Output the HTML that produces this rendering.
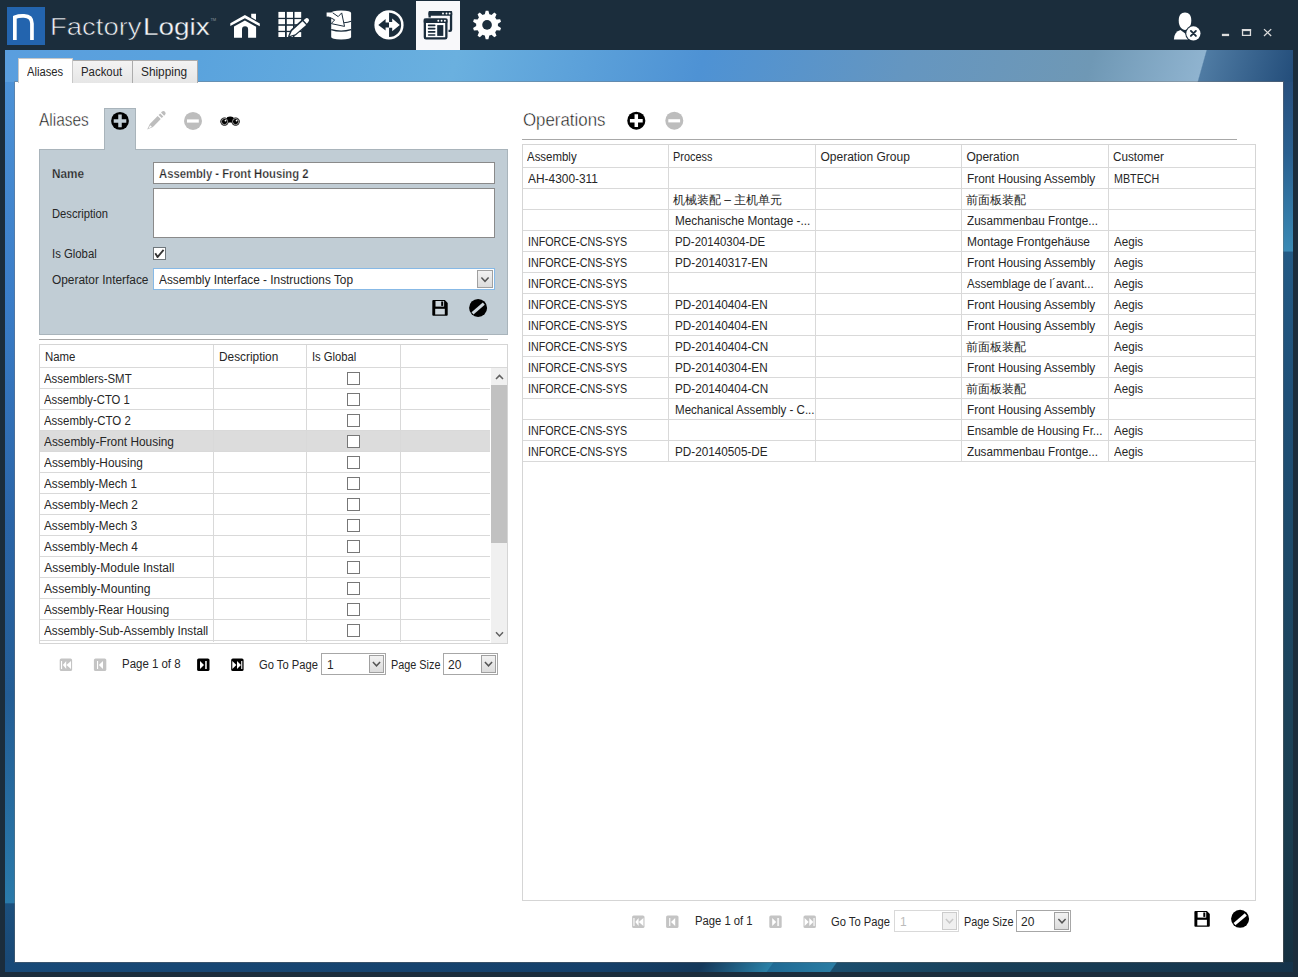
<!DOCTYPE html>
<html><head><meta charset="utf-8">
<style>
*{margin:0;padding:0;box-sizing:border-box}
html,body{width:1298px;height:977px;overflow:hidden;background:#1b2d3c;font-family:"Liberation Sans",sans-serif;font-size:12px;color:#262626}
.a{position:absolute}
.t{position:absolute;white-space:nowrap;line-height:14px;font-size:12px}
#frame{left:5px;top:50px;width:1288px;height:922px;background:linear-gradient(180deg,#4f95d9 0%,#3a7dc8 27%,#2a65a8 51%,#235d95 70%,#2874a6 88%,#2a7aaa 92.5%,#1c507e 92.6%,#184875 100%)}
#topband{left:5px;top:50px;width:1288px;height:32px;background:linear-gradient(105.7deg,#5a9ede 0%,#5aa3dd 15%,#6ab0df 35%,#4e92d4 54%,#6596c0 70%,#6f98b5 84%,#8fb3cf 92.6%,#4f7ba3 92.7%,#234d7a 100%)}
#rightband{left:1283px;top:82px;width:10px;height:890px;background:linear-gradient(180deg,#28507e 0%,#2a6090 8%,#3a8ab5 19%,#235a85 19.1%,#1f5078 35%,#1d4b6c 50%,#1c4258 72%,#1a3c4e 85%,#152f3f 100%)}
#botband{left:5px;top:962px;width:1288px;height:10px;background:linear-gradient(125deg,#184a78 0%,#15406a 46%,#14385a 54%,#2a80a6 59.3%,#1f6a94 59.4%,#2a7ca3 64.2%,#1b4e6e 64.3%,#183f58 77%,#15334a 100%)}
#content{left:15px;top:82px;width:1268px;height:880px;background:#fff;box-shadow:0 0 0 1px rgba(120,110,100,.35)}
.tab{position:absolute;height:23px;top:60px;background:linear-gradient(#f3f3f3,#e6e6e6);border:1px solid #acacac;border-bottom:none;text-align:center;line-height:22px;color:#333}
.tab.sel{top:58px;height:25px;background:#fff;border-color:#c8c8c8;z-index:2}
.bx{position:absolute}
.cb{position:absolute;width:13px;height:13px;border:1px solid #707070;background:#fff}
.combo{position:absolute;border:1px solid #a7a7a7;background:#fff}
.dd{position:absolute;border:1px solid #a0a0a0;background:linear-gradient(#f2f2f2,#dcdcdc)}
</style></head><body>
<div id="frame" class="a"></div><div id="topband" class="a"></div><div id="rightband" class="a"></div><div id="botband" class="a"></div><div id="content" class="a"></div>
<div class="bx" style="left:416px;top:1px;width:44px;height:49px;background:#f8f8fa;"></div>
<div class="bx" style="left:7px;top:7px;width:38px;height:38px;background:#2364ae;"></div>
<div class="t" style="left:49.60px;top:12.37px;font-size:24px;line-height:29px;transform:scaleX(1.1438);transform-origin:0 0;color:#eef1f3;-webkit-text-stroke:0.6px #1b2d3c">Factory</div>
<div class="t" style="left:143.40px;top:12.37px;font-size:24px;line-height:29px;transform:scaleX(1.1638);transform-origin:0 0;color:#f4f6f7;-webkit-text-stroke:0.3px #1b2d3c">Logix</div>
<div class="t" style="left:210.50px;top:16.68px;font-size:4px;line-height:5px;color:#8a949c;letter-spacing:-0.3px">TM</div>
<div class="tab sel" style="left:18px;width:55px"></div>
<div class="tab" style="left:72px;width:61px"></div>
<div class="tab" style="left:132px;width:66px"></div>
<div class="t" style="left:27.10px;top:65.23px;font-size:12px;line-height:14px;transform:scaleX(0.9354);transform-origin:0 0;z-index:3">Aliases</div>
<div class="t" style="left:81.30px;top:65.23px;font-size:12px;line-height:14px;transform:scaleX(0.9493);transform-origin:0 0;z-index:3">Packout</div>
<div class="t" style="left:141.10px;top:65.23px;font-size:12px;line-height:14px;transform:scaleX(0.9872);transform-origin:0 0;z-index:3">Shipping</div>
<div class="t" style="left:39.30px;top:108.02px;font-size:19px;line-height:23px;transform:scaleX(0.8124);transform-origin:0 0;color:#111;-webkit-text-stroke:0.45px #fff">Aliases</div>
<div class="bx" style="left:104px;top:108px;width:32px;height:42px;background:#c1cdd5;border:1px solid #a9b4bb;border-bottom:none"></div>
<div class="bx" style="left:39px;top:149px;width:469px;height:186px;background:#c1cdd5;border:1px solid #a9b4bb"></div>
<div class="bx" style="left:105px;top:149px;width:30px;height:2px;background:#c1cdd5;"></div>
<div class="t" style="left:52.40px;top:167.03px;font-size:12px;line-height:14px;transform:scaleX(0.9786);transform-origin:0 0;font-weight:bold;-webkit-text-stroke:0.25px #c1cdd5">Name</div>
<div class="bx" style="left:153px;top:162px;width:342px;height:22px;background:#fff;border:1px solid #8a8a8a"></div>
<div class="t" style="left:158.60px;top:166.73px;font-size:12px;line-height:14px;transform:scaleX(0.9379);transform-origin:0 0;font-weight:bold;-webkit-text-stroke:0.25px #fff">Assembly - Front Housing 2</div>
<div class="t" style="left:52.40px;top:207.03px;font-size:12px;line-height:14px;transform:scaleX(0.9333);transform-origin:0 0;">Description</div>
<div class="bx" style="left:153px;top:188px;width:342px;height:50px;background:#fff;border:1px solid #8a8a8a"></div>
<div class="t" style="left:52.40px;top:246.63px;font-size:12px;line-height:14px;transform:scaleX(0.9451);transform-origin:0 0;">Is Global</div>
<div class="cb" style="left:153px;top:247px;border-color:#6e767b"></div>
<div class="t" style="left:52.40px;top:273.03px;font-size:12px;line-height:14px;transform:scaleX(0.9908);transform-origin:0 0;">Operator Interface</div>
<div class="bx" style="left:153px;top:268px;width:342px;height:22px;background:#fff;border:1px solid #87b9e6"></div>
<div class="t" style="left:158.50px;top:273.03px;font-size:12px;line-height:14px;transform:scaleX(0.9873);transform-origin:0 0;">Assembly Interface - Instructions Top</div>
<div class="dd" style="left:477px;top:270px;width:16px;height:18px"></div>
<div class="bx" style="left:39px;top:339px;width:449px;height:1px;background:#a8a8a8;"></div>
<div class="bx" style="left:39px;top:344px;width:469px;height:300px;background:#fff;border:1px solid #d5d5d5"></div>
<div class="bx" style="left:40px;top:367px;width:467px;height:1px;background:#d9d9d9;"></div>
<div class="bx" style="left:40px;top:431px;width:450px;height:20px;background:#dcdcdc;"></div>
<div class="bx" style="left:40px;top:388px;width:450px;height:1px;background:#d9d9d9;"></div>
<div class="bx" style="left:40px;top:409px;width:450px;height:1px;background:#d9d9d9;"></div>
<div class="bx" style="left:40px;top:430px;width:450px;height:1px;background:#d9d9d9;"></div>
<div class="bx" style="left:40px;top:451px;width:450px;height:1px;background:#d9d9d9;"></div>
<div class="bx" style="left:40px;top:472px;width:450px;height:1px;background:#d9d9d9;"></div>
<div class="bx" style="left:40px;top:493px;width:450px;height:1px;background:#d9d9d9;"></div>
<div class="bx" style="left:40px;top:514px;width:450px;height:1px;background:#d9d9d9;"></div>
<div class="bx" style="left:40px;top:535px;width:450px;height:1px;background:#d9d9d9;"></div>
<div class="bx" style="left:40px;top:556px;width:450px;height:1px;background:#d9d9d9;"></div>
<div class="bx" style="left:40px;top:577px;width:450px;height:1px;background:#d9d9d9;"></div>
<div class="bx" style="left:40px;top:598px;width:450px;height:1px;background:#d9d9d9;"></div>
<div class="bx" style="left:40px;top:619px;width:450px;height:1px;background:#d9d9d9;"></div>
<div class="bx" style="left:40px;top:640px;width:450px;height:1px;background:#d9d9d9;"></div>
<div class="bx" style="left:213px;top:345px;width:1px;height:297px;background:#d9d9d9;"></div>
<div class="bx" style="left:306px;top:345px;width:1px;height:297px;background:#d9d9d9;"></div>
<div class="bx" style="left:400px;top:345px;width:1px;height:297px;background:#d9d9d9;"></div>
<div class="t" style="left:44.60px;top:349.83px;font-size:12px;line-height:14px;transform:scaleX(0.9500);transform-origin:0 0;">Name</div>
<div class="t" style="left:218.60px;top:349.83px;font-size:12px;line-height:14px;transform:scaleX(0.9867);transform-origin:0 0;">Description</div>
<div class="t" style="left:311.70px;top:349.83px;font-size:12px;line-height:14px;transform:scaleX(0.9367);transform-origin:0 0;">Is Global</div>
<div class="t" style="left:44.30px;top:371.83px;font-size:12px;line-height:14px;transform:scaleX(0.9522);transform-origin:0 0;">Assemblers-SMT</div>
<div class="cb" style="left:347px;top:372px;border-color:#777"></div>
<div class="t" style="left:44.30px;top:392.83px;font-size:12px;line-height:14px;transform:scaleX(0.9418);transform-origin:0 0;">Assembly-CTO 1</div>
<div class="cb" style="left:347px;top:393px;border-color:#777"></div>
<div class="t" style="left:44.30px;top:413.83px;font-size:12px;line-height:14px;transform:scaleX(0.9517);transform-origin:0 0;">Assembly-CTO 2</div>
<div class="cb" style="left:347px;top:414px;border-color:#777"></div>
<div class="t" style="left:44.30px;top:434.83px;font-size:12px;line-height:14px;transform:scaleX(0.9893);transform-origin:0 0;">Assembly-Front Housing</div>
<div class="cb" style="left:347px;top:435px;border-color:#777"></div>
<div class="t" style="left:44.30px;top:455.83px;font-size:12px;line-height:14px;transform:scaleX(0.9880);transform-origin:0 0;">Assembly-Housing</div>
<div class="cb" style="left:347px;top:456px;border-color:#777"></div>
<div class="t" style="left:44.30px;top:476.83px;font-size:12px;line-height:14px;transform:scaleX(0.9748);transform-origin:0 0;">Assembly-Mech 1</div>
<div class="cb" style="left:347px;top:477px;border-color:#777"></div>
<div class="t" style="left:44.30px;top:497.83px;font-size:12px;line-height:14px;transform:scaleX(0.9843);transform-origin:0 0;">Assembly-Mech 2</div>
<div class="cb" style="left:347px;top:498px;border-color:#777"></div>
<div class="t" style="left:44.30px;top:518.83px;font-size:12px;line-height:14px;transform:scaleX(0.9790);transform-origin:0 0;">Assembly-Mech 3</div>
<div class="cb" style="left:347px;top:519px;border-color:#777"></div>
<div class="t" style="left:44.30px;top:539.83px;font-size:12px;line-height:14px;transform:scaleX(0.9843);transform-origin:0 0;">Assembly-Mech 4</div>
<div class="cb" style="left:347px;top:540px;border-color:#777"></div>
<div class="t" style="left:44.30px;top:560.83px;font-size:12px;line-height:14px;">Assembly-Module Install</div>
<div class="cb" style="left:347px;top:561px;border-color:#777"></div>
<div class="t" style="left:44.30px;top:581.83px;font-size:12px;line-height:14px;transform:scaleX(1.0104);transform-origin:0 0;">Assembly-Mounting</div>
<div class="cb" style="left:347px;top:582px;border-color:#777"></div>
<div class="t" style="left:44.30px;top:602.83px;font-size:12px;line-height:14px;transform:scaleX(0.9668);transform-origin:0 0;">Assembly-Rear Housing</div>
<div class="cb" style="left:347px;top:603px;border-color:#777"></div>
<div class="t" style="left:44.30px;top:623.83px;font-size:12px;line-height:14px;transform:scaleX(0.9768);transform-origin:0 0;">Assembly-Sub-Assembly Install</div>
<div class="cb" style="left:347px;top:624px;border-color:#777"></div>
<div class="bx" style="left:491px;top:368px;width:16px;height:275px;background:#f0f0f0;"></div>
<div class="bx" style="left:491px;top:385px;width:16px;height:158px;background:#c1c1c1;"></div>
<div class="t" style="left:122.40px;top:656.93px;font-size:12px;line-height:14px;transform:scaleX(0.9544);transform-origin:0 0;">Page 1 of 8</div>
<div class="t" style="left:258.70px;top:657.63px;font-size:12px;line-height:14px;transform:scaleX(0.9320);transform-origin:0 0;">Go To Page</div>
<div class="bx" style="left:321px;top:653px;width:65px;height:22px;background:#fff;border:1px solid #a7a7a7"></div>
<div class="t" style="left:327.00px;top:657.63px;font-size:12px;line-height:14px;">1</div>
<div class="dd" style="left:369px;top:655px;width:15px;height:18px"></div>
<div class="t" style="left:390.80px;top:657.83px;font-size:12px;line-height:14px;transform:scaleX(0.9031);transform-origin:0 0;">Page Size</div>
<div class="bx" style="left:443px;top:653px;width:55px;height:22px;background:#fff;border:1px solid #a7a7a7"></div>
<div class="t" style="left:448.00px;top:657.63px;font-size:12px;line-height:14px;">20</div>
<div class="dd" style="left:481px;top:655px;width:15px;height:18px"></div>
<div class="t" style="left:522.70px;top:108.02px;font-size:19px;line-height:23px;transform:scaleX(0.8870);transform-origin:0 0;color:#111;-webkit-text-stroke:0.45px #fff">Operations</div>
<div class="bx" style="left:522px;top:139px;width:715px;height:1px;background:#a8a8a8;"></div>
<div class="bx" style="left:522px;top:144px;width:734px;height:757px;background:#fff;border:1px solid #d5d5d5"></div>
<div class="t" style="left:527.40px;top:149.83px;font-size:12px;line-height:14px;transform:scaleX(0.9538);transform-origin:0 0;">Assembly</div>
<div class="t" style="left:673.30px;top:149.83px;font-size:12px;line-height:14px;transform:scaleX(0.9076);transform-origin:0 0;">Process</div>
<div class="t" style="left:820.50px;top:149.83px;font-size:12px;line-height:14px;">Operation Group</div>
<div class="t" style="left:966.40px;top:149.83px;font-size:12px;line-height:14px;">Operation</div>
<div class="t" style="left:1113.30px;top:149.83px;font-size:12px;line-height:14px;transform:scaleX(0.9769);transform-origin:0 0;">Customer</div>
<div class="bx" style="left:668px;top:145px;width:1px;height:316px;background:#d9d9d9;"></div>
<div class="bx" style="left:815px;top:145px;width:1px;height:316px;background:#d9d9d9;"></div>
<div class="bx" style="left:961px;top:145px;width:1px;height:316px;background:#d9d9d9;"></div>
<div class="bx" style="left:1108px;top:145px;width:1px;height:316px;background:#d9d9d9;"></div>
<div class="bx" style="left:523px;top:167px;width:732px;height:1px;background:#d9d9d9;"></div>
<div class="bx" style="left:523px;top:188px;width:732px;height:1px;background:#d9d9d9;"></div>
<div class="bx" style="left:523px;top:209px;width:732px;height:1px;background:#d9d9d9;"></div>
<div class="bx" style="left:523px;top:230px;width:732px;height:1px;background:#d9d9d9;"></div>
<div class="bx" style="left:523px;top:251px;width:732px;height:1px;background:#d9d9d9;"></div>
<div class="bx" style="left:523px;top:272px;width:732px;height:1px;background:#d9d9d9;"></div>
<div class="bx" style="left:523px;top:293px;width:732px;height:1px;background:#d9d9d9;"></div>
<div class="bx" style="left:523px;top:314px;width:732px;height:1px;background:#d9d9d9;"></div>
<div class="bx" style="left:523px;top:335px;width:732px;height:1px;background:#d9d9d9;"></div>
<div class="bx" style="left:523px;top:356px;width:732px;height:1px;background:#d9d9d9;"></div>
<div class="bx" style="left:523px;top:377px;width:732px;height:1px;background:#d9d9d9;"></div>
<div class="bx" style="left:523px;top:398px;width:732px;height:1px;background:#d9d9d9;"></div>
<div class="bx" style="left:523px;top:419px;width:732px;height:1px;background:#d9d9d9;"></div>
<div class="bx" style="left:523px;top:440px;width:732px;height:1px;background:#d9d9d9;"></div>
<div class="bx" style="left:523px;top:461px;width:732px;height:1px;background:#d9d9d9;"></div>
<div class="t" style="left:528.40px;top:171.63px;font-size:12px;line-height:14px;transform:scaleX(0.9929);transform-origin:0 0;">AH-4300-311</div>
<div class="t" style="left:966.50px;top:171.63px;font-size:12px;line-height:14px;transform:scaleX(0.9862);transform-origin:0 0;">Front Housing Assembly</div>
<div class="t" style="left:1114.20px;top:171.63px;font-size:12px;line-height:14px;transform:scaleX(0.8935);transform-origin:0 0;">MBTECH</div>
<div class="t" style="left:673.00px;top:192.63px;font-size:12px;line-height:14px;">机械装配 – 主机单元</div>
<div class="t" style="left:966.00px;top:192.63px;font-size:12px;line-height:14px;">前面板装配</div>
<div class="t" style="left:674.80px;top:213.63px;font-size:12px;line-height:14px;transform:scaleX(0.9790);transform-origin:0 0;">Mechanische Montage -...</div>
<div class="t" style="left:966.50px;top:213.63px;font-size:12px;line-height:14px;transform:scaleX(0.9725);transform-origin:0 0;">Zusammenbau Frontge...</div>
<div class="t" style="left:528.40px;top:234.63px;font-size:12px;line-height:14px;transform:scaleX(0.8913);transform-origin:0 0;">INFORCE-CNS-SYS</div>
<div class="t" style="left:674.80px;top:234.63px;font-size:12px;line-height:14px;transform:scaleX(0.9504);transform-origin:0 0;">PD-20140304-DE</div>
<div class="t" style="left:966.50px;top:234.63px;font-size:12px;line-height:14px;transform:scaleX(0.9911);transform-origin:0 0;">Montage Frontgehäuse</div>
<div class="t" style="left:1114.20px;top:234.63px;font-size:12px;line-height:14px;transform:scaleX(0.9667);transform-origin:0 0;">Aegis</div>
<div class="t" style="left:528.40px;top:255.63px;font-size:12px;line-height:14px;transform:scaleX(0.8913);transform-origin:0 0;">INFORCE-CNS-SYS</div>
<div class="t" style="left:674.80px;top:255.63px;font-size:12px;line-height:14px;transform:scaleX(0.9780);transform-origin:0 0;">PD-20140317-EN</div>
<div class="t" style="left:966.50px;top:255.63px;font-size:12px;line-height:14px;transform:scaleX(0.9862);transform-origin:0 0;">Front Housing Assembly</div>
<div class="t" style="left:1114.20px;top:255.63px;font-size:12px;line-height:14px;transform:scaleX(0.9667);transform-origin:0 0;">Aegis</div>
<div class="t" style="left:528.40px;top:276.63px;font-size:12px;line-height:14px;transform:scaleX(0.8913);transform-origin:0 0;">INFORCE-CNS-SYS</div>
<div class="t" style="left:966.50px;top:276.63px;font-size:12px;line-height:14px;transform:scaleX(0.9591);transform-origin:0 0;">Assemblage de l´avant...</div>
<div class="t" style="left:1114.20px;top:276.63px;font-size:12px;line-height:14px;transform:scaleX(0.9667);transform-origin:0 0;">Aegis</div>
<div class="t" style="left:528.40px;top:297.63px;font-size:12px;line-height:14px;transform:scaleX(0.8913);transform-origin:0 0;">INFORCE-CNS-SYS</div>
<div class="t" style="left:674.80px;top:297.63px;font-size:12px;line-height:14px;transform:scaleX(0.9780);transform-origin:0 0;">PD-20140404-EN</div>
<div class="t" style="left:966.50px;top:297.63px;font-size:12px;line-height:14px;transform:scaleX(0.9862);transform-origin:0 0;">Front Housing Assembly</div>
<div class="t" style="left:1114.20px;top:297.63px;font-size:12px;line-height:14px;transform:scaleX(0.9667);transform-origin:0 0;">Aegis</div>
<div class="t" style="left:528.40px;top:318.63px;font-size:12px;line-height:14px;transform:scaleX(0.8913);transform-origin:0 0;">INFORCE-CNS-SYS</div>
<div class="t" style="left:674.80px;top:318.63px;font-size:12px;line-height:14px;transform:scaleX(0.9780);transform-origin:0 0;">PD-20140404-EN</div>
<div class="t" style="left:966.50px;top:318.63px;font-size:12px;line-height:14px;transform:scaleX(0.9862);transform-origin:0 0;">Front Housing Assembly</div>
<div class="t" style="left:1114.20px;top:318.63px;font-size:12px;line-height:14px;transform:scaleX(0.9667);transform-origin:0 0;">Aegis</div>
<div class="t" style="left:528.40px;top:339.63px;font-size:12px;line-height:14px;transform:scaleX(0.8913);transform-origin:0 0;">INFORCE-CNS-SYS</div>
<div class="t" style="left:674.80px;top:339.63px;font-size:12px;line-height:14px;transform:scaleX(0.9780);transform-origin:0 0;">PD-20140404-CN</div>
<div class="t" style="left:966.00px;top:339.63px;font-size:12px;line-height:14px;">前面板装配</div>
<div class="t" style="left:1114.20px;top:339.63px;font-size:12px;line-height:14px;transform:scaleX(0.9667);transform-origin:0 0;">Aegis</div>
<div class="t" style="left:528.40px;top:360.63px;font-size:12px;line-height:14px;transform:scaleX(0.8913);transform-origin:0 0;">INFORCE-CNS-SYS</div>
<div class="t" style="left:674.80px;top:360.63px;font-size:12px;line-height:14px;transform:scaleX(0.9780);transform-origin:0 0;">PD-20140304-EN</div>
<div class="t" style="left:966.50px;top:360.63px;font-size:12px;line-height:14px;transform:scaleX(0.9862);transform-origin:0 0;">Front Housing Assembly</div>
<div class="t" style="left:1114.20px;top:360.63px;font-size:12px;line-height:14px;transform:scaleX(0.9667);transform-origin:0 0;">Aegis</div>
<div class="t" style="left:528.40px;top:381.63px;font-size:12px;line-height:14px;transform:scaleX(0.8913);transform-origin:0 0;">INFORCE-CNS-SYS</div>
<div class="t" style="left:674.80px;top:381.63px;font-size:12px;line-height:14px;transform:scaleX(0.9780);transform-origin:0 0;">PD-20140404-CN</div>
<div class="t" style="left:966.00px;top:381.63px;font-size:12px;line-height:14px;">前面板装配</div>
<div class="t" style="left:1114.20px;top:381.63px;font-size:12px;line-height:14px;transform:scaleX(0.9667);transform-origin:0 0;">Aegis</div>
<div class="t" style="left:674.80px;top:402.63px;font-size:12px;line-height:14px;transform:scaleX(0.9641);transform-origin:0 0;">Mechanical Assembly - C...</div>
<div class="t" style="left:966.50px;top:402.63px;font-size:12px;line-height:14px;transform:scaleX(0.9862);transform-origin:0 0;">Front Housing Assembly</div>
<div class="t" style="left:528.40px;top:423.63px;font-size:12px;line-height:14px;transform:scaleX(0.8913);transform-origin:0 0;">INFORCE-CNS-SYS</div>
<div class="t" style="left:966.50px;top:423.63px;font-size:12px;line-height:14px;transform:scaleX(0.9576);transform-origin:0 0;">Ensamble de Housing Fr...</div>
<div class="t" style="left:1114.20px;top:423.63px;font-size:12px;line-height:14px;transform:scaleX(0.9667);transform-origin:0 0;">Aegis</div>
<div class="t" style="left:528.40px;top:444.63px;font-size:12px;line-height:14px;transform:scaleX(0.8913);transform-origin:0 0;">INFORCE-CNS-SYS</div>
<div class="t" style="left:674.80px;top:444.63px;font-size:12px;line-height:14px;transform:scaleX(0.9780);transform-origin:0 0;">PD-20140505-DE</div>
<div class="t" style="left:966.50px;top:444.63px;font-size:12px;line-height:14px;transform:scaleX(0.9725);transform-origin:0 0;">Zusammenbau Frontge...</div>
<div class="t" style="left:1114.20px;top:444.63px;font-size:12px;line-height:14px;transform:scaleX(0.9667);transform-origin:0 0;">Aegis</div>
<div class="t" style="left:694.70px;top:913.83px;font-size:12px;line-height:14px;transform:scaleX(0.9381);transform-origin:0 0;">Page 1 of 1</div>
<div class="t" style="left:831.20px;top:914.53px;font-size:12px;line-height:14px;transform:scaleX(0.9320);transform-origin:0 0;">Go To Page</div>
<div class="bx" style="left:894px;top:910px;width:65px;height:22px;background:#fff;border:1px solid #d9d9d9"></div>
<div class="t" style="left:900.00px;top:914.53px;font-size:12px;line-height:14px;color:#bbb">1</div>
<div class="dd" style="left:942px;top:912px;width:15px;height:18px;border-color:#ccc;background:#f0f0f0"></div>
<div class="t" style="left:963.60px;top:914.73px;font-size:12px;line-height:14px;transform:scaleX(0.9031);transform-origin:0 0;">Page Size</div>
<div class="bx" style="left:1016px;top:910px;width:55px;height:22px;background:#fff;border:1px solid #a7a7a7"></div>
<div class="t" style="left:1021.00px;top:914.53px;font-size:12px;line-height:14px;">20</div>
<div class="dd" style="left:1054px;top:912px;width:15px;height:18px"></div>
<svg class="a" style="left:0;top:0;z-index:5" width="1298" height="977" viewBox="0 0 1298 977"><path d="M14.85 40 V17.2 Q19 15.6 24 15.9 Q31.95 16.3 31.95 23.5 V40" fill="none" stroke="#fff" stroke-width="3.7"/><path d="M230.3,23.2 L244.9,15.1 L259.8,23.5 L259.8,26.3 L244.9,18.2 L230.3,26 Z" fill="#fff"/><path d="M251.2,13.8 H256 V19.9 L251.2,17.3 Z" fill="#fff"/><path d="M234,26.6 L244.9,20.5 L256.1,26.7 V37.8 H248.1 V29.4 A3.05,3.05 0 0 0 242,29.4 V37.8 H234 Z" fill="#fff"/><rect x="278.4" y="11.9" width="6.6" height="5.9" fill="#fff"/><rect x="278.4" y="19.1" width="6.6" height="5.1" fill="#fff"/><rect x="278.4" y="25.8" width="6.6" height="5.0" fill="#fff"/><rect x="278.4" y="32.1" width="6.6" height="4.9" fill="#fff"/><rect x="286.8" y="11.9" width="6.2" height="5.9" fill="#fff"/><rect x="286.8" y="19.1" width="6.2" height="5.1" fill="#fff"/><rect x="286.8" y="25.8" width="6.2" height="5.0" fill="#fff"/><rect x="286.8" y="32.1" width="6.2" height="4.9" fill="#fff"/><rect x="294.5" y="11.9" width="6.7" height="5.9" fill="#fff"/><rect x="294.5" y="19.1" width="6.7" height="5.1" fill="#fff"/><rect x="294.5" y="25.8" width="6.7" height="5.0" fill="#fff"/><rect x="294.5" y="32.1" width="6.7" height="4.9" fill="#fff"/><path d="M289.2,36.3 L291.5,30.6 L304.6,18.6 L308.3,22.6 L295.2,34.4 Z" fill="none" stroke="#1b2d3c" stroke-width="2.2" stroke-linejoin="round"/><path d="M289.6,35.9 L291.9,31 L302.6,21.2 L306.1,25 L295.3,34.3 Z" fill="#fff"/><path d="M303.6,20.2 L305.3,18.7 A2,2 0 0 1 308.3,22 L306.8,23.7 Z" fill="#fff"/><path d="M331.2,13 Q331.2,10.5 341.15,10.5 Q351.1,10.5 351.1,13 V37 Q351.1,39.4 341.15,39.4 Q331.2,39.4 331.2,37 Z" fill="#fff"/><path d="M331.2,29.6 Q341,32.6 351.1,29.6" fill="none" stroke="#1b2d3c" stroke-width="1.3"/><path d="M343.8,22.7 Q348,22.5 351.1,21.3" fill="none" stroke="#1b2d3c" stroke-width="1.1"/><path d="M327.1,13.1 L332.8,12.9 L338.2,16.6 L341.7,12.9 L344.5,26.4 L331.2,23.6 L334.7,19.9 L327.1,15.9 Z" fill="#fff" stroke="#1b2d3c" stroke-width="1" stroke-linejoin="round"/><path d="M326.6,12.6 L332.8,12.4 L332.8,16.4 L326.6,16.4 Z" fill="#fff"/><circle cx="389" cy="24.9" r="14.6" fill="#fff"/><path d="M389.05,12.8 A12.1,12.1 0 0 1 389.05,37 Z" fill="#1b2d3c"/><path d="M378.3,24.9 L385.6,19.1 V22.4 H389.05 V27.4 H385.6 V30.6 Z" fill="#1b2d3c"/><path d="M399.8,24.9 L392.2,18.4 V21.9 H389 V27.8 H392.2 V31.3 Z" fill="#fff"/><rect x="429.65" y="12.15" width="21.4" height="18.7" rx="1.2" fill="none" stroke="#1b2d3c" stroke-width="2.3"/><rect x="428.5" y="11" width="23.7" height="4.7" rx="1" fill="#1b2d3c"/><circle cx="443" cy="13.5" r="0.95" fill="#fff"/><circle cx="446.5" cy="13.5" r="0.95" fill="#fff"/><circle cx="449.6" cy="13.5" r="0.95" fill="#fff"/><rect x="422.7" y="17.4" width="25.8" height="23.1" rx="1.5" fill="#f8f8fa"/><rect x="424.85" y="19.55" width="21.5" height="18.8" rx="1.2" fill="#fff" stroke="#1b2d3c" stroke-width="2.3"/><rect x="423.7" y="18.4" width="23.8" height="4.6" rx="1" fill="#1b2d3c"/><circle cx="438.3" cy="20.7" r="0.95" fill="#fff"/><circle cx="441.6" cy="20.7" r="0.95" fill="#fff"/><circle cx="444.9" cy="20.7" r="0.95" fill="#fff"/><rect x="427.8" y="24.549999999999997" width="7.7" height="1.7" rx="0.8" fill="#1b2d3c"/><rect x="427.8" y="27.849999999999998" width="7.7" height="1.7" rx="0.8" fill="#1b2d3c"/><rect x="427.8" y="31.049999999999997" width="7.7" height="1.7" rx="0.8" fill="#1b2d3c"/><rect x="427.8" y="34.15" width="7.7" height="1.7" rx="0.8" fill="#1b2d3c"/><rect x="437.2" y="25.1" width="6.1" height="10.8" fill="#1b2d3c"/><path d="M484.77,14.24 L485.70,10.66 L488.40,10.66 L489.33,14.24 A10.9,10.9 0 0 1 491.47,14.94 L494.33,12.59 L496.51,14.17 L495.16,17.62 A10.9,10.9 0 0 1 496.48,19.44 L500.17,19.22 L501.01,21.78 L497.89,23.78 A10.9,10.9 0 0 1 497.89,26.02 L501.01,28.02 L500.17,30.58 L496.48,30.36 A10.9,10.9 0 0 1 495.16,32.18 L496.51,35.63 L494.33,37.21 L491.47,34.86 A10.9,10.9 0 0 1 489.33,35.56 L488.40,39.14 L485.70,39.14 L484.77,35.56 A10.9,10.9 0 0 1 482.63,34.86 L479.77,37.21 L477.59,35.63 L478.94,32.18 A10.9,10.9 0 0 1 477.62,30.36 L473.93,30.58 L473.09,28.02 L476.21,26.02 A10.9,10.9 0 0 1 476.21,23.78 L473.09,21.78 L473.93,19.22 L477.62,19.44 A10.9,10.9 0 0 1 478.94,17.62 L477.59,14.17 L479.77,12.59 L482.63,14.94 A10.9,10.9 0 0 1 484.77,14.24 Z" fill="#fff" fill-rule="evenodd"/><circle cx="487.05" cy="24.9" r="4.83" fill="#1b2d3c"/><path d="M1185,12.6 C1189,12.6 1191.3,15.5 1191.3,20.5 C1191.3,26.5 1188,30 1185,30 C1182,30 1178.7,26.5 1178.7,20.5 C1178.7,15.5 1181,12.6 1185,12.6 Z" fill="#fff"/><path d="M1173.9,39.5 Q1174.2,31.5 1180.5,30 L1185.2,33.5 L1188.5,39.5 Z" fill="#fff"/><circle cx="1193.4" cy="33.4" r="8.1" fill="#1b2d3c"/><circle cx="1193.4" cy="33.4" r="7.1" fill="#fff"/><path d="M1190.9,30.9 L1195.9,35.9 M1195.9,30.9 L1190.9,35.9" stroke="#1b2d3c" stroke-width="1.9" stroke-linecap="round"/><rect x="1221.9" y="33.8" width="7.2" height="2.3" fill="#dcdcdc"/><path d="M1242.55,29.6 H1250.45 V35.45 H1242.55 Z" fill="none" stroke="#dcdcdc" stroke-width="1.3"/><rect x="1241.9" y="29" width="9.2" height="2.1" fill="#dcdcdc"/><path d="M1264,29.1 L1271.2,36 M1271.2,29.1 L1264,36" stroke="#dcdcdc" stroke-width="1.3"/><circle cx="120" cy="120.9" r="8.9" fill="#000"/><path d="M118.25,114.5 H121.75 V119.15 H126.3 V122.65 H121.75 V127.3 H118.25 V122.65 H113.7 V119.15 H118.25 Z" fill="#c1cdd5"/><path d="M147.2,129.6 L149.8,123.96 L157.62,115.96 L160.78,119.04 L152.98,127.04 Z" fill="#bdbdbd"/><path d="M148.4,128.4 L150.2,125.2 L151.8,126.8 Z" fill="#fff"/><path d="M158.6,115 L160.2,113.4 L163.3,116.5 L161.7,118.1 Z" fill="#bdbdbd"/><path d="M161,112.6 L162,111.6 A2.2,2.2 0 0 1 165.1,114.7 L164.1,115.7 Z" fill="#bdbdbd"/><circle cx="193" cy="120.9" r="9" fill="#bdbdbd"/><rect x="187" y="119.4" width="11.8" height="3.2" fill="#fff"/><path d="M227,117.2 Q230.2,115.8 233.4,117.2 L233.6,122.5 H226.8 Z" fill="#000"/><circle cx="224.5" cy="121.6" r="4.2" fill="#000"/><circle cx="224.5" cy="121.6" r="3.1" fill="none" stroke="#fff" stroke-width="0.6"/><circle cx="225.5" cy="120.6" r="0.9" fill="#fff"/><circle cx="235.6" cy="121.6" r="4.2" fill="#000"/><circle cx="235.6" cy="121.6" r="3.1" fill="none" stroke="#fff" stroke-width="0.6"/><circle cx="236.6" cy="120.6" r="0.9" fill="#fff"/><path d="M432.3,301.1 Q432.3,300.1 433.3,300.1 H444.8 L447.7,303.0 V314.8 Q447.7,315.8 446.7,315.8 H433.3 Q432.3,315.8 432.3,314.8 Z" fill="#000"/><rect x="435.5" y="301.0" width="8.6" height="5.6" fill="#cdd6dc"/><rect x="441.2" y="301.5" width="2" height="4.4" fill="#000"/><rect x="435.2" y="308.8" width="9.6" height="5.7" fill="#cdd6dc"/><circle cx="478.1" cy="307.9" r="9" fill="#000"/><path d="M472.5,313.29999999999995 L483.8,303.59999999999997" stroke="#cdd6dc" stroke-width="3"/><path d="M1194.4,912.1 Q1194.4,911.1 1195.4,911.1 H1206.9 L1209.8000000000002,914.0 V925.8000000000001 Q1209.8000000000002,926.8000000000001 1208.8000000000002,926.8000000000001 H1195.4 Q1194.4,926.8000000000001 1194.4,925.8000000000001 Z" fill="#000"/><rect x="1197.6000000000001" y="912.0" width="8.6" height="5.6" fill="#fff"/><rect x="1203.3000000000002" y="912.5" width="2" height="4.4" fill="#000"/><rect x="1197.3000000000002" y="919.8000000000001" width="9.6" height="5.7" fill="#fff"/><circle cx="1240.1" cy="918.8" r="9" fill="#000"/><path d="M1234.5,924.1999999999999 L1245.8,914.5" stroke="#fff" stroke-width="3"/><path d="M155.3,253.2 L157.5,257.1 L163.6,249.9" fill="none" stroke="#333" stroke-width="1.8" stroke-linejoin="round"/><circle cx="636.3" cy="120.7" r="9.05" fill="#000"/><path d="M634.55,114.3 H638.05 V118.95 H642.7 V122.45 H638.05 V127.1 H634.55 V122.45 H629.9 V118.95 H634.55 Z" fill="#fff"/><circle cx="674.3" cy="120.7" r="9" fill="#bdbdbd"/><rect x="668.3" y="119.2" width="11.8" height="3.2" fill="#fff"/><rect x="59.7" y="658.5" width="12.4" height="12.5" rx="1.6" fill="#c4c4c4"/><rect x="61.0" y="661.0" width="1.1" height="8" fill="#fff"/><path d="M62.900000000000006,665.0 L66.2,661.0 V669.0 Z M66.4,665.0 L71.0,661.0 V669.0 Z" fill="#fff"/><rect x="93.9" y="658.5" width="12.4" height="12.5" rx="1.6" fill="#c4c4c4"/><rect x="97.0" y="661.0" width="1.1" height="8" fill="#fff"/><path d="M98.80000000000001,665.0 L103.0,661.0 V669.0 Z" fill="#fff"/><rect x="197.1" y="658.5" width="12.4" height="12.5" rx="1.6" fill="#000"/><path d="M200.0,661.0 L204.0,665.0 L200.0,669.0 Z" fill="#fff"/><rect x="205.0" y="661.0" width="1.9" height="8" fill="#fff" opacity="0.8"/><rect x="231.2" y="658.5" width="12.4" height="12.5" rx="1.6" fill="#000"/><path d="M232.29999999999998,661.0 L236.39999999999998,665.0 L232.29999999999998,669.0 Z M237.0,661.0 L241.0,665.0 L237.0,669.0 Z" fill="#fff"/><rect x="241.2" y="661.0" width="1.1" height="8" fill="#fff"/><rect x="632.1" y="915.5" width="12.4" height="12.5" rx="1.6" fill="#c4c4c4"/><rect x="633.4" y="918.0" width="1.1" height="8" fill="#fff"/><path d="M635.3000000000001,922.0 L638.6,918.0 V926.0 Z M638.8000000000001,922.0 L643.4,918.0 V926.0 Z" fill="#fff"/><rect x="666.1" y="915.5" width="12.4" height="12.5" rx="1.6" fill="#c4c4c4"/><rect x="669.2" y="918.0" width="1.1" height="8" fill="#fff"/><path d="M671.0,922.0 L675.2,918.0 V926.0 Z" fill="#fff"/><rect x="769.3" y="915.5" width="12.4" height="12.5" rx="1.6" fill="#c4c4c4"/><path d="M772.1999999999999,918.0 L776.1999999999999,922.0 L772.1999999999999,926.0 Z" fill="#fff"/><rect x="777.1999999999999" y="918.0" width="1.9" height="8" fill="#fff" opacity="0.8"/><rect x="803.5" y="915.5" width="12.4" height="12.5" rx="1.6" fill="#c4c4c4"/><path d="M804.6,918.0 L808.7,922.0 L804.6,926.0 Z M809.3,918.0 L813.3,922.0 L809.3,926.0 Z" fill="#fff"/><rect x="813.5" y="918.0" width="1.1" height="8" fill="#fff"/><path d="M481.4,277.5 L485,281.3 L488.6,277.5" fill="none" stroke="#555" stroke-width="1.5"/><path d="M372.9,662 L376.5,665.8 L380.1,662" fill="none" stroke="#555" stroke-width="1.5"/><path d="M484.9,662 L488.5,665.8 L492.1,662" fill="none" stroke="#555" stroke-width="1.5"/><path d="M945.9,919 L949.5,922.8 L953.1,919" fill="none" stroke="#c8c8c8" stroke-width="1.5"/><path d="M1058.4,919 L1062,922.8 L1065.6,919" fill="none" stroke="#555" stroke-width="1.5"/><path d="M496,379 L499.5,375.4 L503,379" fill="none" stroke="#606060" stroke-width="1.5"/><path d="M496,632.3 L499.5,635.9 L503,632.3" fill="none" stroke="#606060" stroke-width="1.5"/></svg>
</body></html>
